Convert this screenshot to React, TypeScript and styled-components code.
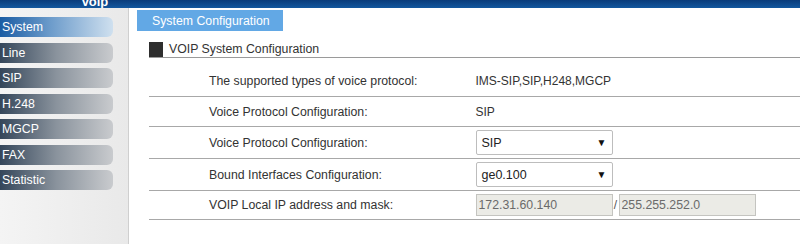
import React from "react"
import styled, { createGlobalStyle } from "styled-components"

const menu = ["System", "Line", "SIP", "H.248", "MGCP", "FAX", "Statistic"]

export default function App() {
  return (
    <Page>
      <Global />
      <Header>
        <Title>Voip</Title>
      </Header>
      <Body>
        <Sidebar>
          {menu.map((m, i) => (
            <MenuItem key={m} $active={i === 0}>
              {m}
            </MenuItem>
          ))}
        </Sidebar>
        <Main>
          <Tab>System Configuration</Tab>
          <Section>
            <SectionHead>
              <Square />
              <SectionTitle>VOIP System Configuration</SectionTitle>
            </SectionHead>
            <Table>
              <Row $h={32}>
                <Label>The supported types of voice protocol:</Label>
                <Value>IMS-SIP,SIP,H248,MGCP</Value>
              </Row>
              <Row $h={30}>
                <Label>Voice Protocol Configuration:</Label>
                <Value>SIP</Value>
              </Row>
              <Row $h={32}>
                <Label>Voice Protocol Configuration:</Label>
                <Value>
                  <Select>
                    <span>SIP</span>
                    <Arrow>▼</Arrow>
                  </Select>
                </Value>
              </Row>
              <Row $h={32}>
                <Label>Bound Interfaces Configuration:</Label>
                <Value>
                  <Select>
                    <span>ge0.100</span>
                    <Arrow>▼</Arrow>
                  </Select>
                </Value>
              </Row>
              <Row $h={29}>
                <Label>VOIP Local IP address and mask:</Label>
                <Value>
                  <Input value="172.31.60.140" readOnly />
                  <Slash>/</Slash>
                  <Input value="255.255.252.0" readOnly />
                </Value>
              </Row>
            </Table>
          </Section>
        </Main>
      </Body>
    </Page>
  )
}

const Global = createGlobalStyle`
  html, body {
    margin: 0;
    padding: 0;
    background: #fff;
    overflow: hidden;
  }
  body {
    font-family: "Liberation Sans", Arial, sans-serif;
  }
`
const Page = styled.div`
  width: 800px;
  height: 244px;
  display: flex;
  flex-direction: column;
  overflow: hidden;
`
const Header = styled.div`
  height: 8px;
  flex: none;
  display: flex;
  align-items: flex-end;
  padding-left: 81px;
  overflow: hidden;
  background: linear-gradient(#0a3c7a, #13589e);
`
const Title = styled.div`
  color: #fff;
  font-weight: bold;
  font-size: 13px;
  line-height: 12px;
`
const Body = styled.div`
  flex: 1;
  display: flex;
`
const Sidebar = styled.div`
  width: 128px;
  flex: none;
  padding-top: 9px;
  display: flex;
  flex-direction: column;
  gap: 5.5px;
  background: linear-gradient(90deg, #f4f4f4, #e9e9e9);
  border-right: 1px solid #cfcfcf;
`
const MenuItem = styled.div<{ $active?: boolean }>`
  width: 111px;
  height: 20px;
  padding-left: 2px;
  display: flex;
  align-items: center;
  border-radius: 0 6px 6px 0;
  color: #fff;
  font-size: 12.3px;
  background: ${(p) =>
    p.$active
      ? "linear-gradient(90deg, #1a5ca3, #6d9ccb 45%, #cfe0ef)"
      : "linear-gradient(90deg, #34465a, #8a939d 50%, #c9cbce)"};
`
const Main = styled.div`
  flex: 1;
  padding: 2px 0 0 8px;
  display: flex;
  flex-direction: column;
  align-items: flex-start;
`
const Tab = styled.div`
  width: 146px;
  height: 21px;
  padding-left: 15px;
  box-sizing: border-box;
  display: flex;
  align-items: center;
  background: #62a8e5;
  color: #fff;
  font-size: 12.3px;
`
const Section = styled.div`
  align-self: stretch;
  margin: 10px 0 0 12px;
`
const SectionHead = styled.div`
  height: 16px;
  display: flex;
  align-items: flex-end;
  gap: 6px;
  border-bottom: 1px solid #9a9a9a;
`
const Square = styled.div`
  width: 14px;
  height: 15px;
  background: #2e2e2e;
`
const SectionTitle = styled.div`
  color: #333;
  font-size: 12.3px;
  line-height: 14px;
  padding-bottom: 1px;
`
const Table = styled.div`
  margin-top: 7px;
  display: flex;
  flex-direction: column;
`
const Row = styled.div<{ $h: number }>`
  height: ${(p) => p.$h}px;
  box-sizing: border-box;
  display: grid;
  grid-template-columns: 50% 50%;
  align-items: center;
  border-bottom: 1px solid #a8a8a8;
`
const Label = styled.div`
  padding-left: 60px;
  color: #333;
  font-size: 12.3px;
`
const Value = styled.div`
  padding-left: 1px;
  display: flex;
  align-items: center;
  color: #333;
  font-size: 12px;
`
const Select = styled.div`
  width: 137px;
  height: 25px;
  box-sizing: border-box;
  display: flex;
  align-items: center;
  justify-content: space-between;
  padding: 0 5px 0 5px;
  background: #fff;
  border: 1px solid #bdbdbd;
  border-radius: 2px;
  color: #222;
  font-size: 12.5px;
`
const Arrow = styled.span`
  font-size: 10px;
  color: #111;
`
const Input = styled.input`
  width: 137px;
  height: 22px;
  box-sizing: border-box;
  padding: 0 2px;
  margin: 0;
  background: #ebebe6;
  border: 1px solid #c4c4c0;
  border-radius: 0;
  color: #6a6a6a;
  font-family: "Liberation Sans", Arial, sans-serif;
  font-size: 12.3px;
  outline: none;
`
const Slash = styled.span`
  width: 6px;
  text-align: center;
  color: #555;
  font-size: 12px;
`
